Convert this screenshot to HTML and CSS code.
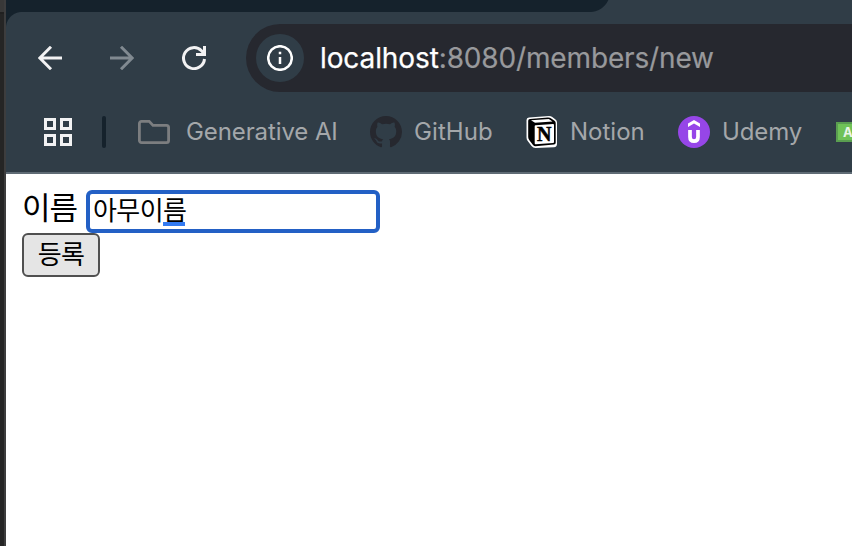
FILE: index.html
```html
<!DOCTYPE html>
<html lang="ko">
<head>
<meta charset="utf-8">
<title>members/new</title>
<link rel="stylesheet" href="styles.css">
</head>
<body>
<div class="desktop-edge"></div>
<div class="window">
  <header class="chrome">
    <div class="tabstrip"></div>
    <div class="toolbar">
      <svg class="back" width="24" height="24" viewBox="0 0 24 24"><path d="M24 12H2M13 .8L1.800 12 13 23.200"/></svg>
      <svg class="forward" width="24" height="24" viewBox="0 0 24 24"><path d="M0 12h22M11 .8L22.200 12 11 23.200"/></svg>
      <svg class="reload" width="24" height="24" viewBox="0 0 24 24"><path d="M22.500 13A10.500 10.500 0 1 1 19.500 4.700L22 7.500M14 8.500h8.500V0"/></svg>
      <div class="address">
        <div class="info"><svg width="26" height="26" viewBox="0 0 26 26"><circle cx="13" cy="13" r="11.8"/><path d="M13 12v7M13 6.8v2.5"/></svg></div>
        <div class="url"><span class="host">localhost</span><span class="path">:8080/members/new</span></div>
      </div>
    </div>
    <nav class="bookmarks">
      <svg class="apps" width="28" height="28" viewBox="0 0 28 28"><path d="M1.5 1.5h9v9h-9zM17.5 1.5h9v9h-9zM1.5 17.5h9v9h-9zM17.5 17.5h9v9h-9z"/></svg>
      <i class="divider"></i>
      <svg class="folder" width="32" height="24" viewBox="0 0 32 24"><path d="M3.5 1.4h7.700l3.800 4h13.500a2.100 2.100 0 0 1 2.100 2.100v13a2.100 2.100 0 0 1-2.100 2.100h-25a2.100 2.100 0 0 1-2.100-2.100v-17a2.100 2.100 0 0 1 2.100-2.100z"/></svg>
      <span class="name generative">Generative AI</span>
      <svg class="github" width="32" height="32" viewBox="0 0 16 16"><path d="M8 0C3.58 0 0 3.58 0 8c0 3.54 2.29 6.53 5.47 7.59.4.07.55-.17.55-.38 0-.19-.01-.82-.01-1.49-2.01.37-2.53-.49-2.69-.94-.09-.23-.48-.94-.82-1.13-.28-.15-.68-.52-.01-.53.63-.01 1.08.58 1.23.82.72 1.21 1.87.87 2.33.66.07-.52.28-.87.51-1.07-1.78-.2-3.64-.89-3.64-3.95 0-.87.31-1.59.82-2.15-.08-.2-.36-1.02.08-2.12 0 0 .67-.21 2.2.82.64-.18 1.32-.27 2-.27s1.36.09 2 .27c1.53-1.04 2.2-.82 2.2-.82.44 1.1.16 1.92.08 2.12.51.56.82 1.27.82 2.15 0 3.07-1.87 3.75-3.65 3.95.29.25.54.73.54 1.48 0 1.07-.01 1.93-.01 2.2 0 .21.15.46.55.38A8.01 8.01 0 0 0 16 8c0-4.42-3.58-8-8-8z"/></svg>
      <span class="name gh-name">GitHub</span>
      <svg class="notion" width="32" height="32" viewBox="0 0 32 32"><path fill="#fff" d="M3 1.5L23 0q2 0 3.300 1l3.200 2.400q1.500 1 1.500 3v21.600q0 3-3 3.200L9.500 32Q7 32 5.500 30L1.700 25Q.5 23.500.5 21.500V4Q.5 1.800 3 1.500z"/><path d="M4 3l18-1.400q2 0 3.200.8L28.500 4.800q1.200.9 1.200 2.300v19.700q0 1.700-1.800 1.800L9.500 30.200Q8 30.200 7 29L3.200 24Q2.200 22.600 2.200 21V4.700Q2.200 3.200 4 3z"/><path fill="#fff" d="M5 4.300L22.800 3l3.700 2.500L9 6.800zM9.600 9.200l17.500-1.200q.9 0 .9 1v17q0 1-.9 1.100L9.600 28.300q-.9 0-.9-1V10.200q0-.9.9-1z"/><text x="18.200" y="24.700" text-anchor="middle" class="notion-letter">N</text></svg>
      <span class="name no-name">Notion</span>
      <svg class="udemy" width="32" height="32" viewBox="0 0 32 32"><circle cx="16" cy="16" r="16"/><path fill="#fff" d="M16 4l6 3.500V11l-6-3.400L10 11V7.500z"/><path class="udemy-u" d="M12 14v6.900q0 4.300 4 4.300t4-4.300V14"/></svg>
      <span class="name ud-name">Udemy</span>
      <span class="green"><b>A</b></span>
    </nav>
  </header>
  <main>
    <form>
      <div class="row"><label>이름</label><div class="field">아무이<span class="composing">름</span></div></div>
      <button type="button">등록</button>
    </form>
  </main>
</div>
</body>
</html>
```
FILE: styles.css
```css
* { box-sizing: border-box; }
body { margin: 0; width: 852px; height: 546px; display: flex; overflow: hidden; background: #fff; font-family: Inter, "Noto Sans CJK KR", sans-serif; }
svg { display: block; flex: none; }
.desktop-edge { flex: none; width: 6px; height: 546px; background: linear-gradient(#383838 12px, #202020 12px, #202020 14px, #252525 14px); border-right: 2px solid #3d3d3e; }
.window { flex: none; width: 846px; }
.chrome { height: 174px; background: #303d47; border-bottom: 2px solid #5f6b75; }
.tabstrip { height: 12px; width: 604px; background: radial-gradient(circle at 0 -8px, #15222c 19.500px, #303d47 20.500px) 584px 0 / 20px 12px no-repeat, linear-gradient(#15222c, #15222c) 0 0 / 584px 12px no-repeat; }
.toolbar { height: 92px; padding: 12px 0 12px 32px; display: flex; align-items: center; background: radial-gradient(circle at 16px 16px, #303d47 15.500px, #15222c 16.500px) 0 0 / 16px 16px no-repeat; }
.toolbar svg { fill: none; stroke: #f2f2f3; stroke-width: 3; }
.toolbar .forward { margin-left: 48px; stroke: #818a91; }
.reload { margin-left: 48px; }
.address { margin-left: 40px; width: 606px; flex: none; height: 68px; padding-left: 10px; border-radius: 34px 0 0 34px; background: #26282f; display: flex; align-items: center; }
.info { width: 48px; height: 48px; border-radius: 50%; background: #303d47; display: flex; align-items: center; justify-content: center; }
.toolbar .info svg { stroke-width: 2.500; stroke: #fff; }
.url { margin-left: 16px; font-size: 28px; line-height: 34px; white-space: nowrap; }
.host { color: #fff; letter-spacing: -.1px; -webkit-text-stroke: .25px #fff; }
.path { color: #98999c; letter-spacing: -.15px; -webkit-text-stroke: .2px #98999c; }
.bookmarks { height: 56px; padding-left: 38px; display: flex; align-items: center; overflow: hidden; }
.apps { fill: none; stroke: #f2f2f3; stroke-width: 3; }
.divider { flex: none; width: 4px; height: 32px; margin-left: 30px; border-radius: 2px; background: #15222c; }
.folder { margin-left: 32px; fill: none; stroke: #7c7e80; stroke-width: 2.800; }
.name { flex: none; color: #a4a7aa; font-size: 24px; line-height: 30px; white-space: nowrap; }
.generative { margin-left: 16px; width: 184px; letter-spacing: -.1px; }
.github { fill: #26282f; }
.gh-name { margin-left: 12px; width: 112px; letter-spacing: .1px; }
.notion-letter { font: bold 20px "Liberation Serif", serif; stroke: #000; stroke-width: .5px; }
.no-name { margin-left: 12px; width: 108px; }
.udemy { fill: #9646e8; }
.udemy-u { fill: none; stroke: #fff; stroke-width: 3.700; }
.ud-name { margin-left: 12px; width: 114px; letter-spacing: -.1px; }
.green { flex: none; width: 32px; height: 20px; background: #6fc257; border: 2px solid #5a9e50; padding-left: 5px; font-size: 13px; line-height: 16px; color: #e9f5e5; }
main { padding: 16px; height: 372px; background: #fff; color: #000; font-family: "Noto Sans CJK KR", sans-serif; }
.row { display: flex; height: 43px; }
label { width: 64px; font-size: 31px; line-height: 31px; letter-spacing: -.9px; }
.field { width: 294px; height: 43px; border: 4px solid #2360c5; border-radius: 6px; padding-left: 3px; font-size: 26px; line-height: 29px; letter-spacing: -.6px; }
.composing { display: inline-block; height: 32px; line-height: 29px; border-bottom: 4px solid #327af2; vertical-align: top; letter-spacing: -2.400px; }
button { display: block; width: 78px; height: 44px; padding: 0 0 4px; border: 2px solid #505050; border-radius: 6px; background: #e5e5e5; color: #000; font: 26px/34px "Noto Sans CJK KR", sans-serif; letter-spacing: -.6px; }
```
